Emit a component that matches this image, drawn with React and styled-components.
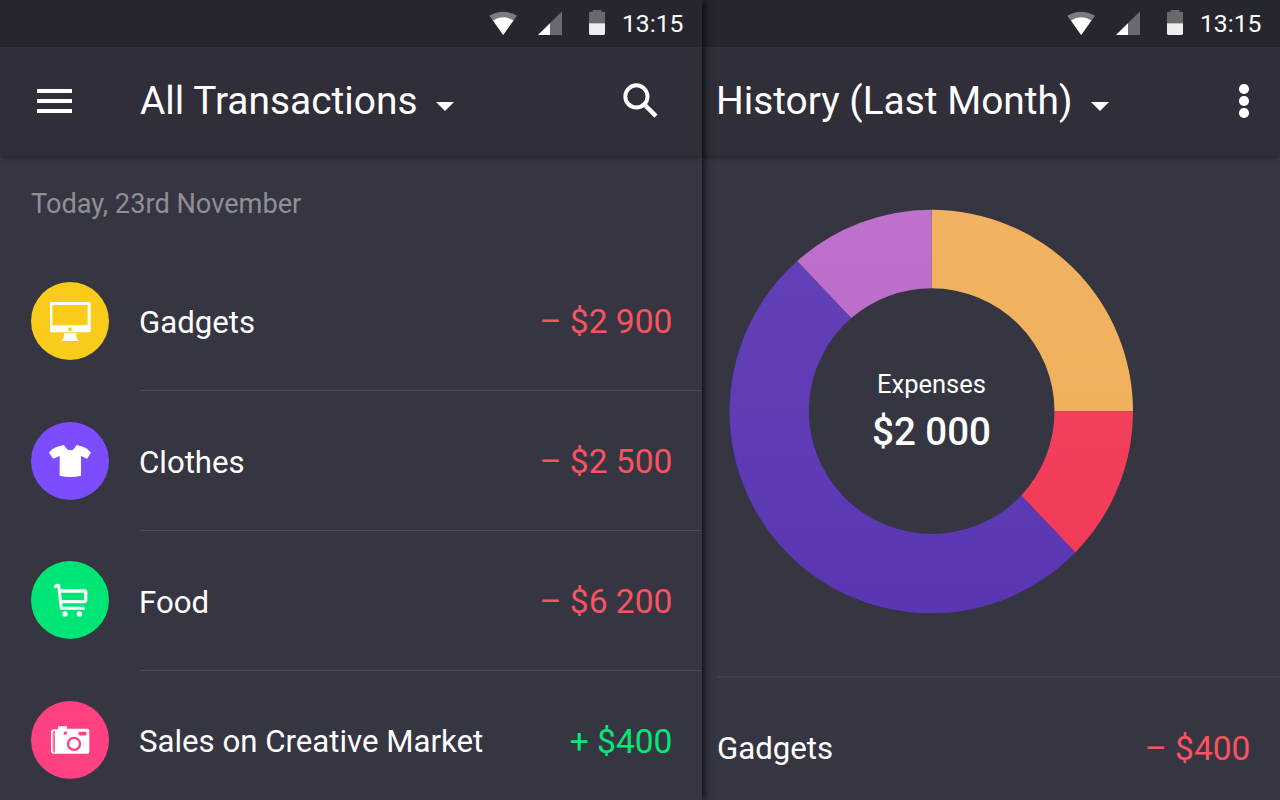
import React from "react";
import styled, { createGlobalStyle } from "styled-components";

const GlobalStyle = createGlobalStyle`
  * { box-sizing: border-box; }
  body { margin: 0; background: #363542; }
`;

const Screen = styled.div`
  display: flex;
  width: 1280px;
  height: 800px;
  overflow: hidden;
  font-family: Roboto, "Liberation Sans", sans-serif;
  color: #fff;
  background: #363542;
`;

const Panel = styled.section`
  position: relative;
  z-index: ${(p) => (p.$raised ? 1 : 0)};
  display: flex;
  flex-direction: column;
  flex: 0 0 ${(p) => p.$width}px;
  height: 800px;
  background: #363542;
  box-shadow: ${(p) => (p.$raised ? "2px 0 8px rgba(0, 0, 0, 0.8)" : "none")};
`;

const StatusBar = styled.div`
  display: flex;
  flex: 0 0 47px;
  align-items: center;
  justify-content: flex-end;
  padding-right: 18px;
  background: #26262f;
`;

const StatusIcons = styled.svg`
  width: 117px;
  height: 47px;
  margin-right: 16px;
`;

const Clock = styled.time`
  width: 62px;
  padding-top: 1px;
  font-size: 24.7px;
  line-height: 44px;
  white-space: nowrap;
`;

const Header = styled.header`
  display: flex;
  flex: 0 0 109px;
  align-items: center;
  padding: 0 ${(p) => p.$right}px 2px ${(p) => p.$left}px;
  background: #2f2e39;
  box-shadow: 0 3px 4px -1px rgba(0, 0, 0, 0.3);
`;

const MenuIcon = styled.div`
  display: flex;
  flex-direction: column;
  gap: 6px;
  width: 35px;
  margin-right: 68px;
`;

const MenuBar = styled.span`
  height: 4px;
  background: #fff;
`;

const Title = styled.h1`
  margin: 0;
  padding-top: 1px;
  font-size: 38.9px;
  font-weight: 400;
  line-height: 46px;
  white-space: nowrap;
`;

const Caret = styled.span`
  width: 0;
  height: 0;
  margin: 11px auto 0 18px;
  border: 9.5px solid transparent;
  border-top-color: #fff;
  border-bottom: 0;
`;

const SearchSvg = styled.svg`
  width: 36px;
  height: 36px;
`;

const MoreButton = styled.div`
  display: flex;
  flex-direction: column;
  gap: 2.2px;
  padding-top: 1px;
`;

const Dot = styled.span`
  width: 9.6px;
  height: 9.6px;
  border-radius: 50%;
  background: #fff;
`;

const DateLabel = styled.div`
  flex: 0 0 95px;
  padding: 32px 0 0 31px;
  font-size: 27.2px;
  line-height: 32px;
  color: #908f96;
`;

const List = styled.div`
  display: flex;
  flex-direction: column;
`;

const Row = styled.div`
  display: flex;
  flex: 0 0 139.85px;
  align-items: stretch;
  padding-left: 31px;
`;

const Badge = styled.div`
  flex: 0 0 78px;
  height: 78px;
  margin: 30.8px 31px 0 0;
  border-radius: 50%;
  background: ${(p) => p.$color};
`;

const BadgeSvg = styled.svg`
  display: block;
  width: 78px;
  height: 78px;
`;

const RowBody = styled.div`
  display: flex;
  flex: 1;
  align-items: center;
  justify-content: space-between;
  padding: 4px 29.5px 0 0;
  border-bottom: 1px solid #4a4954;
`;

const Name = styled.span`
  margin-left: -1px;
  font-size: 31.2px;
  line-height: 38px;
  padding-top: 1px;
`;

const Amount = styled.span`
  font-size: 33.6px;
  line-height: 40px;
  color: ${(p) => (p.$income ? "#05e776" : "#f8535f")};
`;

const ChartArea = styled.div`
  display: flex;
  flex: 0 0 520px;
  padding: 53px 0 0 27px;
`;

const Chart = styled.div`
  display: grid;
  place-items: center;
  width: 405px;
  height: 405px;

  > * { grid-area: 1 / 1; }
`;

const Donut = styled.svg`
  width: 405px;
  height: 405px;
`;

const Summary = styled.div`
  display: flex;
  flex-direction: column;
  align-items: center;
  gap: 2px;
  padding-bottom: 2px;
`;

const SummaryLabel = styled.span`
  font-size: 25.5px;
  line-height: 40px;
`;

const SummaryValue = styled.strong`
  font-size: 38.5px;
  font-weight: 500;
  line-height: 52px;
`;

const SummaryRow = styled.div`
  display: flex;
  flex: 0 0 143px;
  align-items: center;
  justify-content: space-between;
  margin-left: 16px;
  padding-right: 29.5px;
  border-top: 2px solid #403f4b;
`;

const Status = () => (
  <StatusBar>
    <StatusIcons viewBox="489 0 117 47">
      <path d="M489.3 15.8Q503 7.6 517 15.8L503.2 35Z" fill="#7b7b80" />
      <path d="M493 20.4Q503 14.2 513.4 20.4L503.2 35Z" fill="#fff" />
      <path d="M562 11.3V35H538Z" fill="#6a6a70" />
      <path d="M550 23.2V35H538Z" fill="#fff" />
      <path d="M589 23.3V13Q589 11.7 590.3 11.7H592.7V10H601.3V11.7H603.6Q605 11.7 605 13V23.3Z" fill="#68686d" />
      <path d="M589 23.3H605V33.6Q605 35 603.6 35H590.4Q589 35 589 33.6Z" fill="#eee" />
    </StatusIcons>
    <Clock>13:15</Clock>
  </StatusBar>
);

const MonitorIcon = () => (
  <BadgeSvg viewBox="33 36 234 234" fill="#fff">
    <path fillRule="evenodd" d="M95 96H207Q212 96 212 101V182Q212 187 207 187H95Q90 187 90 182V101Q90 96 95 96ZM97 105V166H203V105Z" />
    <path d="M132 190H169Q168 201 171 206Q176 208 176 213H125Q125 208 130 206Q133 201 132 190Z" />
    <path d="M150 173Q151 170 154 170Q154 173 151 174Q154 173 156 175Q153 178 156 181Q154 184 151 183Q146 184 144 179Q144 172 150 173Z" fill="#f9cc1c" />
  </BadgeSvg>
);

const ShirtIcon = () => (
  <BadgeSvg viewBox="33 35 234 234" fill="#fff">
    <path d="M132 104Q140 120 151 120Q163 120 169 104L189 109Q204 114 213 127L201 145L183 137V196Q152 204 119 196V137L100 145L87 127Q96 114 112 109Z" />
  </BadgeSvg>
);

const CartIcon = () => (
  <BadgeSvg viewBox="33 34 234 234" fill="none" stroke="#fff">
    <path d="M106 111Q108 105 116 107L124 176H190" strokeWidth="9" strokeLinecap="round" strokeLinejoin="round" />
    <path d="M120 124H193Q197 124 197 128V150Q197 155 192 156H125" strokeWidth="10" />
    <circle cx="135" cy="193" r="8" fill="#fff" stroke="none" />
    <circle cx="178" cy="193" r="8" fill="#fff" stroke="none" />
  </BadgeSvg>
);

const CameraIcon = () => (
  <BadgeSvg viewBox="33 33.5 234 234" fill="#fff">
    <path d="M101 118H114V111Q114 109 117 109H138Q141 109 141 112V117H202Q208 117 208 123V186Q208 192 202 192H101Q93 191 93 183V127Q93 119 101 118Z" />
    <path d="M105 122Q98 122 98 129V181Q98 188 105 188Z" fill="#ff4081" />
    <path d="M102 124V186" stroke="#fff" strokeWidth="1.5" />
    <circle cx="136" cy="130" r="5" fill="#ff4081" />
    <path d="M176 126H199V137H179Q176 137 176 134Z" fill="#ff4081" />
    <circle cx="162" cy="162" r="18" fill="none" stroke="#ff4081" strokeWidth="7" />
  </BadgeSvg>
);

const transactions = [
  { name: "Gadgets", amount: "– $2 900", color: "#f9cc1c", Icon: MonitorIcon },
  { name: "Clothes", amount: "– $2 500", color: "#7c4dff", Icon: ShirtIcon },
  { name: "Food", amount: "– $6 200", color: "#00e676", Icon: CartIcon },
  { name: "Sales on Creative Market", amount: "+ $400", color: "#ff4081", Icon: CameraIcon, income: true },
];

export default function App() {
  return (
    <>
      <GlobalStyle />
      <Screen>
        <Panel $width={702} $raised>
          <Status />
          <Header $left={37} $right={43}>
            <MenuIcon>
              <MenuBar />
              <MenuBar />
              <MenuBar />
            </MenuIcon>
            <Title>All Transactions</Title>
            <Caret />
            <SearchSvg viewBox="623 83 36 36" fill="none" stroke="#fff">
              <circle cx="636.4" cy="96.4" r="11.1" strokeWidth="3.9" />
              <path d="M645.1 105.2L656 116.1" strokeWidth="4.4" />
            </SearchSvg>
          </Header>
          <DateLabel>Today, 23rd November</DateLabel>
          <List>
            {transactions.map(({ name, amount, color, Icon, income }) => (
              <Row key={name}>
                <Badge $color={color}>
                  <Icon />
                </Badge>
                <RowBody>
                  <Name>{name}</Name>
                  <Amount $income={income}>{amount}</Amount>
                </RowBody>
              </Row>
            ))}
          </List>
        </Panel>
        <Panel $width={578}>
          <Status />
          <Header $left={14} $right={31}>
            <Title>History (Last Month)</Title>
            <Caret />
            <MoreButton>
              <Dot />
              <Dot />
              <Dot />
            </MoreButton>
          </Header>
          <ChartArea>
            <Chart>
              <Donut viewBox="729 209 405 405">
                <defs>
                  <linearGradient id="shade" gradientUnits="userSpaceOnUse" x1="0" y1="210" x2="0" y2="613">
                    <stop offset="0" stopColor="#fff" stopOpacity="0.06" />
                    <stop offset="1" stopColor="#fff" stopOpacity="0" />
                  </linearGradient>
                </defs>
                <path d="M931.5 209.8A201.5 201.5 0 0 1 1133 411.3H1054.5A123 123 0 0 0 931.5 288.3Z" fill="#f0ae57" />
                <path d="M1133 411.3A201.5 201.5 0 0 1 1075.3 552.4L1021.2 495.5A123 123 0 0 0 1054.5 411.3Z" fill="#f23a57" />
                <path d="M1075.3 552.4A201.5 201.5 0 1 1 797.2 261.1L851.3 318A123 123 0 1 0 1021.2 495.5Z" fill="#5b36b3" />
                <path d="M797.2 261.1A201.5 201.5 0 0 1 931.5 209.8V288.3A123 123 0 0 0 851.3 318Z" fill="#b968c8" />
                <circle cx="931.5" cy="411.3" r="162.25" fill="none" stroke="url(#shade)" strokeWidth="78.5" />
              </Donut>
              <Summary>
                <SummaryLabel>Expenses</SummaryLabel>
                <SummaryValue>$2 000</SummaryValue>
              </Summary>
            </Chart>
          </ChartArea>
          <SummaryRow>
            <Name>Gadgets</Name>
            <Amount>– $400</Amount>
          </SummaryRow>
        </Panel>
      </Screen>
    </>
  );
}
